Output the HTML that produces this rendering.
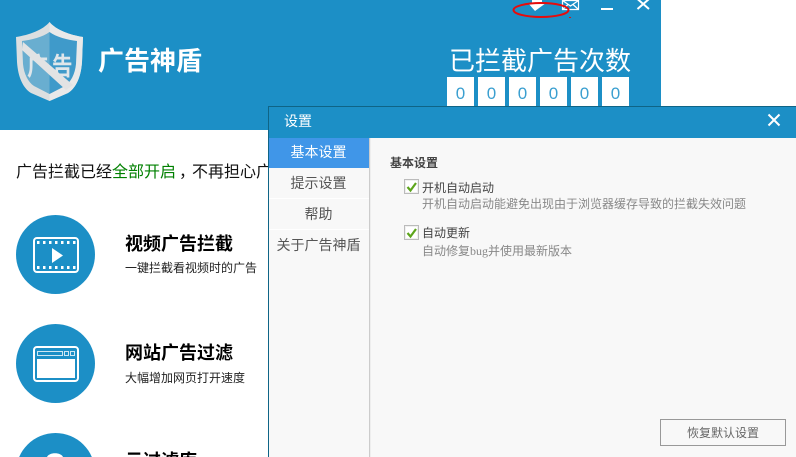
<!DOCTYPE html>
<html lang="zh">
<head>
<meta charset="utf-8">
<style>
html,body{margin:0;padding:0;width:796px;height:457px;overflow:hidden;background:#fff}
body{font-family:"Liberation Sans","Noto Sans CJK SC",sans-serif;}
#w{position:relative;width:796px;height:457px;overflow:hidden;background:#fff}
.a{position:absolute;white-space:nowrap}
.d{position:absolute;top:77px;width:27px;height:29px;background:#fff;color:#3a9fd0;font-size:17px;line-height:29px;padding:0;text-align:center;overflow:hidden}
.d span{position:relative;top:2px}
.c{position:absolute;left:16px;width:79px;height:79px;border-radius:50%;background:#1c8fc6}
.n{position:absolute;left:269px;width:100px;height:30px;line-height:30px;text-align:center;font-size:14px;color:#555;text-indent:-1px;overflow:hidden}
.cb{position:absolute;left:404px;width:13px;height:13px;border:1px solid #bbb;background:#fff;box-shadow:inset 0 0 0 1px #f0f0f0}
</style>
</head>
<body>
<div id="w">
<div class="a" style="left:0;top:0;width:661px;height:130px;background:#1c8fc6"></div>

<svg class="a" style="left:16px;top:22px" width="68" height="80" viewBox="0 0 68 80">
<path d="M33.500 0C40 8 54 13 67 15L66 40C65 55 60 66 52 71L33.500 79L15 71C7 66 2 55 1 40L0 15C13 13 27 8 33.500 0Z" fill="#dcdfe0"/>
<path d="M33.500 0C40 8 54 13 67 15L66 40C65 55 60 66 52 71L33.500 79Z" fill="#e9e9e9"/>
<path d="M33.500 10C27 15 15 18 6 19L7 42C8 52 12 60 18 64L33.500 72Z" fill="#69aed0"/>
<path d="M33.500 10C40 15 52 18 61 19L60 42C59 52 55 60 49 64L33.500 72Z" fill="#3f9aca"/>
<text transform="translate(11 53) scale(.85 1)" font-size="25" font-weight="bold" fill="#dfe6ea" font-family="Liberation Sans,Noto Sans CJK SC,sans-serif">广</text>
<text transform="translate(36 53) scale(.82 1)" font-size="25" font-weight="bold" fill="#dfe6ea" font-family="Liberation Sans,Noto Sans CJK SC,sans-serif">告</text>
<path d="M7 20L6 28L50 68L57 63Z" fill="#e2e3e4"/>
</svg>

<div class="a" style="left:98px;top:42px;font-size:26px;line-height:38px;font-weight:bold;color:#fff">广告神盾</div>

<svg class="a" style="left:510px;top:0" width="150" height="24" viewBox="0 0 150 24">
<rect x="22" y="0" width="10" height="3" fill="#fff"/>
<path d="M18 3H36L25 11Z" fill="#fff"/>
<path d="M52.500 0.500H68.500V9.500H52.500Z M52.500 0.500L60.500 6L68.500 0.500 M52.500 9.500L58 4.500 M68.500 9.500L63 4.500" fill="none" stroke="#fff" stroke-width="1.200"/>
<rect x="91" y="8" width="12" height="2" fill="#fff"/>
<path d="M127.500 -1L139 9M139 -1L127.500 9" stroke="#fff" stroke-width="2" fill="none"/>
<ellipse cx="31" cy="10" rx="27.500" ry="7" fill="none" stroke="#e60c0c" stroke-width="2"/>
<rect x="59" y="17" width="2" height="1" fill="#e01010"/>
</svg>

<div class="a" style="left:449px;top:42px;font-size:26px;line-height:38px;color:#fff">已拦截广告次数</div>
<div class="d" style="left:447px"><span>0</span></div>
<div class="d" style="left:478px"><span>0</span></div>
<div class="d" style="left:509px"><span>0</span></div>
<div class="d" style="left:540px"><span>0</span></div>
<div class="d" style="left:571px"><span>0</span></div>
<div class="d" style="left:602px"><span>0</span></div>

<div class="a" style="left:16px;top:161px;width:252px;overflow:hidden;font-size:16px;line-height:24px;color:#111">广告拦截已经<span style="color:#008000">全部开启</span><span style="position:relative;left:3px">，</span>不再担心广告</div>

<div class="c" style="top:215px"></div>
<svg class="a" style="left:32px;top:236px" width="48" height="38" viewBox="0 0 48 38">
<rect x="2" y="2" width="44" height="34" rx="3" fill="none" stroke="#fff" stroke-width="2"/>
<g fill="#fff">
<rect x="5" y="5" width="2.500" height="3"/><rect x="11" y="5" width="2.500" height="3"/><rect x="17" y="5" width="2.500" height="3"/><rect x="23" y="5" width="2.500" height="3"/><rect x="29" y="5" width="2.500" height="3"/><rect x="35" y="5" width="2.500" height="3"/><rect x="41" y="5" width="2.500" height="3"/>
<rect x="5" y="30" width="2.500" height="3"/><rect x="11" y="30" width="2.500" height="3"/><rect x="17" y="30" width="2.500" height="3"/><rect x="23" y="30" width="2.500" height="3"/><rect x="29" y="30" width="2.500" height="3"/><rect x="35" y="30" width="2.500" height="3"/><rect x="41" y="30" width="2.500" height="3"/>
<path d="M20 12L31 19.500L20 27Z"/>
</g>
</svg>
<div class="a" style="left:125px;top:231px;font-size:18px;line-height:27px;font-weight:bold;color:#000">视频广告拦截</div>
<div class="a" style="left:125px;top:259px;font-size:12px;line-height:18px;color:#222">一键拦截看视频时的广告</div>

<div class="c" style="top:324px"></div>
<svg class="a" style="left:32px;top:345px" width="48" height="38" viewBox="0 0 48 38">
<rect x="2" y="2" width="44" height="34" rx="3" fill="none" stroke="#fff" stroke-width="2"/>
<rect x="5" y="14" width="38" height="19" fill="#fff"/>
<rect x="5.500" y="6.500" width="25" height="4" fill="none" stroke="#cfe7f3" stroke-width="1"/>
<rect x="32.500" y="6.500" width="4" height="4" fill="none" stroke="#cfe7f3" stroke-width="1"/>
<rect x="38.500" y="6.500" width="4" height="4" fill="none" stroke="#cfe7f3" stroke-width="1"/>
</svg>
<div class="a" style="left:125px;top:340px;font-size:18px;line-height:27px;font-weight:bold;color:#000">网站广告过滤</div>
<div class="a" style="left:125px;top:369px;font-size:12px;line-height:18px;color:#222">大幅增加网页打开速度</div>

<svg class="a" style="left:16px;top:433px" width="252" height="24" viewBox="0 0 252 24">
<circle cx="39.500" cy="39.500" r="39.500" fill="#1c8fc6"/>
<path d="M31 24C33 19 45 19 47 24Z" fill="#fff"/>
<text x="109" y="34" font-size="18" font-weight="bold" fill="#000" font-family="Liberation Sans,Noto Sans CJK SC,sans-serif">云过滤库</text>
</svg>

<!-- Settings dialog -->
<div class="a" style="left:268px;top:106px;width:528px;height:351px;background:#f8f8f8"></div>
<div class="a" style="left:268px;top:106px;width:528px;height:32px;background:#1c8fc6"></div>
<div class="a" style="left:268px;top:106px;width:528px;height:1px;background:#0f6486"></div>
<div class="a" style="left:268px;top:106px;width:1px;height:351px;background:#0f6486"></div>
<div class="a" style="left:284px;top:111px;font-size:14px;line-height:21px;color:#fff">设置</div>
<svg class="a" style="left:767px;top:113px" width="14" height="14" viewBox="0 0 14 14">
<path d="M1.500 1.500L12.500 12.500M12.500 1.500L1.500 12.500" stroke="#fff" stroke-width="2"/>
</svg>

<div class="a" style="left:369px;top:138px;width:1px;height:319px;background:#ccc"></div>
<div class="a" style="left:370px;top:138px;width:1px;height:319px;background:#eee"></div>
<div class="n" style="top:138px;background:#4096e8;color:#fff;line-height:29px">基本设置</div>
<div class="n" style="top:168px">提示设置</div>
<div class="n" style="top:199px">帮助</div>
<div class="n" style="top:230px">关于广告神盾</div>
<div class="a" style="left:269px;top:198px;width:100px;height:1px;background:#fff"></div>
<div class="a" style="left:269px;top:229px;width:100px;height:1px;background:#fff"></div>

<div class="a" style="left:390px;top:154px;font-size:12px;line-height:18px;font-weight:bold;color:#444">基本设置</div>

<div class="cb" style="top:179px"></div>
<svg class="a" style="left:404px;top:179px" width="15" height="15" viewBox="0 0 15 15"><path d="M3.500 8L6.500 11.500L12 4" fill="none" stroke="#5da51c" stroke-width="2.200"/></svg>
<div class="a" style="left:422px;top:179px;font-size:12px;line-height:18px;color:#444">开机自动启动</div>
<div class="a" style="left:422px;top:195px;font-size:12px;line-height:18px;color:#888">开机自动启动能避免出现由于浏览器缓存导致的拦截失效问题</div>

<div class="cb" style="top:225px"></div>
<svg class="a" style="left:404px;top:225px" width="15" height="15" viewBox="0 0 15 15"><path d="M3.500 8L6.500 11.500L12 4" fill="none" stroke="#5da51c" stroke-width="2.200"/></svg>
<div class="a" style="left:422px;top:224px;font-size:12px;line-height:18px;color:#444">自动更新</div>
<div class="a" style="left:422px;top:242px;font-size:12px;line-height:18px;color:#888">自动修复<span style="font-family:'Liberation Serif',serif">bug</span>并使用最新版本</div>

<div class="a" style="left:660px;top:419px;width:124px;height:25px;border:1px solid #999;line-height:26px;text-align:center;font-size:12px;color:#666">恢复默认设置</div>
</div>
</body>
</html>
